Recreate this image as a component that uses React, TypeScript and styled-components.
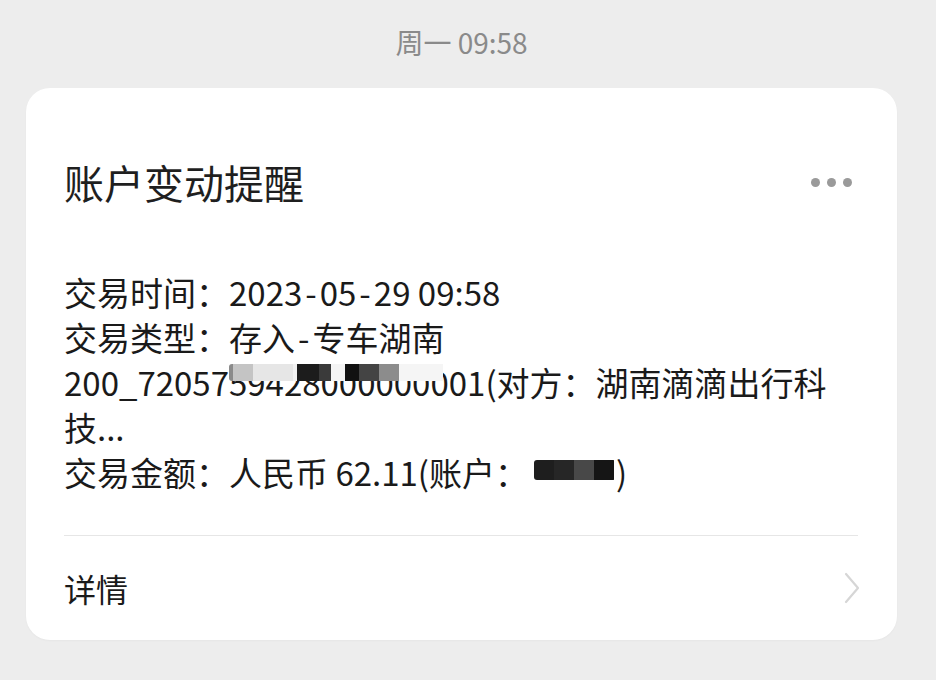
import styled, { createGlobalStyle } from 'styled-components';

const GlobalStyle = createGlobalStyle`
  html, body {
    margin: 0;
    padding: 0;
    background: #ededed;
  }
  body {
    font-family: "Noto Sans CJK SC", "Noto Sans", sans-serif;
  }
`;

const Page = styled.div`
  width: 936px;
  height: 680px;
  box-sizing: border-box;
  padding: 22px 39px 0 26px;
  background: #ededed;
  overflow: hidden;
`;

const TimeStamp = styled.div`
  height: 40px;
  line-height: 40px;
  text-align: center;
  font-size: 28px;
  color: #8a8a8a;
  margin-bottom: 26px;
`;

const Card = styled.section`
  background: #fff;
  border-radius: 24px;
  padding: 70px 39px 0 38px;
  box-shadow: 0 1px 2px rgba(0, 0, 0, 0.03);
`;

const Header = styled.div`
  display: flex;
  align-items: center;
  justify-content: space-between;
  height: 48px;
`;

const Title = styled.h1`
  margin: 0;
  font-size: 40px;
  font-weight: 400;
  line-height: 48px;
  color: #1f1f1f;
`;

const More = styled.div`
  display: flex;
  gap: 7px;
  margin-right: 6px;
`;

const Dot = styled.span`
  width: 9px;
  height: 9px;
  border-radius: 50%;
  background: #9a9a9a;
`;

const Body = styled.div`
  margin-top: 64px;
  font-size: 33px;
  line-height: 45px;
  color: #1a1a1a;
`;

const Line = styled.div`
  white-space: nowrap;
`;

const Dash = styled.span`
  margin: 0 3px;
`;

const Masked = styled.span`
  position: relative;
`;

const Blank = styled.span<{ $w: number }>`
  display: inline-block;
  width: ${(p) => p.$w}px;
`;

const Mosaic = styled.span<{ $top: number; $height: number; $left?: number }>`
  position: absolute;
  left: ${(p) => p.$left ?? 0}px;
  right: 0;
  top: ${(p) => p.$top}px;
  height: ${(p) => p.$height}px;
  display: flex;
  border-radius: 3px;
  overflow: hidden;
`;

const Tile = styled.span<{ $w: number; $c: string }>`
  width: ${(p) => p.$w}px;
  flex: none;
  background: ${(p) => p.$c};
`;

const Divider = styled.hr`
  margin: 40px 0 0;
  border: 0;
  border-top: 1px solid #e6e6e6;
`;

const Footer = styled.div`
  display: flex;
  align-items: center;
  justify-content: space-between;
  height: 104px;
`;

const Detail = styled.span`
  font-size: 32px;
  color: #1a1a1a;
`;

const Chevron = () => (
  <svg width="16" height="32" viewBox="0 0 16 32" style={{ marginRight: -2 }}>
    <polyline points="2,2 14,16 2,30" fill="none" stroke="#d6d6d6" strokeWidth="2.2" strokeLinecap="round" strokeLinejoin="round" />
  </svg>
);

const idTiles: [number, string][] = [
  [4, '#8a8a8a'],
  [20, '#c4c4c4'],
  [40, '#e6e6e6'],
  [4, '#f2f2f2'],
  [22, '#1c1c1c'],
  [12, '#3a3a3a'],
  [14, '#f4f4f4'],
  [14, '#111'],
  [20, '#444'],
  [20, '#8c8c8c'],
  [44, '#f5f5f5'],
];

const acctTiles: [number, string][] = [
  [20, '#1e1e1e'],
  [20, '#262626'],
  [20, '#484848'],
  [20, '#151515'],
];

export default function App() {
  return (
    <>
      <GlobalStyle />
      <Page>
        <TimeStamp>周一 09:58</TimeStamp>
        <Card>
          <Header>
            <Title>账户变动提醒</Title>
            <More>
              <Dot />
              <Dot />
              <Dot />
            </More>
          </Header>
          <Body>
            <Line>
              交易时间：2023<Dash>-</Dash>05<Dash>-</Dash>29 09:58
            </Line>
            <Line>
              交易类型：存入<Dash>-</Dash>专车湖南
            </Line>
            <Line>
              200_72057
              <Masked>
                59428000000001
                <Mosaic $top={6} $height={17}>
                  {idTiles.map(([w, c], i) => (
                    <Tile key={i} $w={w} $c={c} />
                  ))}
                </Mosaic>
              </Masked>
              (对方：湖南滴滴出行科
            </Line>
            <Line>技...</Line>
            <Line>
              交易金额：人民币 62.11(账户：
              <Masked>
                <Blank $w={88} />
                <Mosaic $top={12} $height={20} $left={6}>
                  {acctTiles.map(([w, c], i) => (
                    <Tile key={i} $w={w} $c={c} />
                  ))}
                </Mosaic>
              </Masked>
              )
            </Line>
          </Body>
          <Divider />
          <Footer>
            <Detail>详情</Detail>
            <Chevron />
          </Footer>
        </Card>
      </Page>
    </>
  );
}
